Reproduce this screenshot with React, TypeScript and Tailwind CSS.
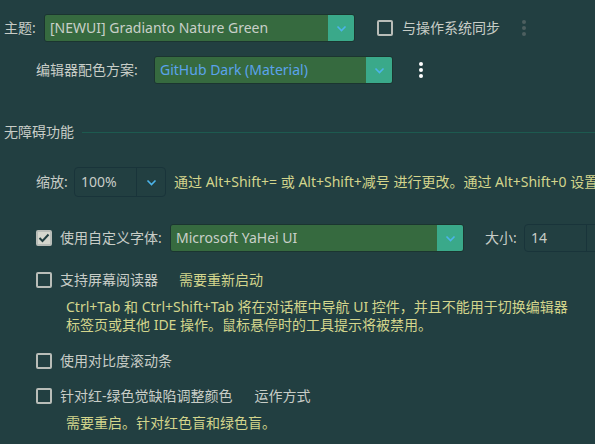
import React from "react"

const Chevron = () => (
  <svg width="11" height="7" viewBox="0 0 11 7" fill="none">
    <path d="M1.5 1.5 L5.5 5.5 L9.5 1.5" stroke="#4cb4ea" strokeWidth="1.6" />
  </svg>
)

const Dots = ({ dim }: { dim?: boolean }) => (
  <div className={`flex flex-col gap-[2px] ${dim ? "text-[#4d5f5f]" : "text-white"}`}>
    <span className="w-[4px] h-[4px] rounded-full bg-current" />
    <span className="w-[4px] h-[4px] rounded-full bg-current" />
    <span className="w-[4px] h-[4px] rounded-full bg-current" />
  </div>
)

const Check = ({ checked }: { checked?: boolean }) => (
  <div
    className={`w-[16px] h-[16px] shrink-0 rounded-[2px] border-2 border-[#b9bdb8] flex items-center justify-center ${
      checked ? "bg-[#d6d7ce]" : ""
    }`}
  >
    {checked && (
      <svg width="12" height="10" viewBox="0 0 12 10" fill="none">
        <path d="M1.5 5 L4.5 8 L10.5 1.5" stroke="#233f41" strokeWidth="2" />
      </svg>
    )}
  </div>
)

const GreenSelect = ({ value, width, blue }: { value: string; width: string; blue?: boolean }) => (
  <div className={`${width} h-[28px] flex rounded-[3px] border border-[#1b3530] overflow-hidden shrink-0`}>
    <div className={`flex-1 bg-[#366a3f] flex items-center pl-[5px] ${blue ? "text-[#5ba3ec]" : "text-[#c9d0c9]"}`}>
      {value}
    </div>
    <div className="w-[26px] bg-[#3aa98a] flex items-center justify-center">
      <Chevron />
    </div>
  </div>
)

export default function App() {
  return (
    <div
      className="w-[595px] h-[444px] overflow-hidden bg-[#223f41] text-[#c8cdc7] text-[14px] leading-[20px]"
      style={{ fontFamily: '"Noto Sans", "Noto Sans CJK SC", sans-serif' }}
    >
      {/* theme */}
      <div className="mt-[14px] h-[28px] flex items-center pl-[4px] whitespace-nowrap">
        <span className="w-[40px] shrink-0">主题:</span>
        <GreenSelect value="[NEWUI] Gradianto Nature Green" width="w-[311px]" />
        <div className="ml-[22px] shrink-0">
          <Check />
        </div>
        <span className="ml-[9px] shrink-0">与操作系统同步</span>
        <div className="ml-[22px] shrink-0">
          <Dots dim />
        </div>
      </div>

      {/* scheme */}
      <div className="mt-[14px] h-[28px] flex items-center pl-[36px] whitespace-nowrap">
        <span className="w-[118px] shrink-0">编辑器配色方案:</span>
        <GreenSelect value="GitHub Dark (Material)" width="w-[239px]" blue />
        <div className="ml-[26px] shrink-0">
          <Dots />
        </div>
      </div>

      {/* section */}
      <div className="mt-[38px] h-[20px] flex items-center pl-[4px]">
        <span className="whitespace-nowrap">无障碍功能</span>
        <div className="flex-1 h-px bg-[#1d5a4f] ml-[8px]" />
      </div>

      {/* zoom */}
      <div className="mt-[25px] h-[30px] flex items-center pl-[36px] whitespace-nowrap">
        <span className="w-[38px] shrink-0">缩放:</span>
        <div className="w-[92px] h-[30px] flex rounded-[4px] border border-[#19343a] shrink-0">
          <div className="w-[62px] flex items-center pl-[6px] border-r border-[#19343a]">100%</div>
          <div className="flex-1 flex items-center justify-center">
            <Chevron />
          </div>
        </div>
        <span className="ml-[8px] shrink-0 text-[#d3d58c]">
          通过 Alt+Shift+= 或 Alt+Shift+减号 进行更改。通过 Alt+Shift+0 设置
        </span>
      </div>

      {/* font */}
      <div className="mt-[27px] h-[28px] flex items-center pl-[36px] whitespace-nowrap">
        <Check checked />
        <span className="ml-[8px] w-[110px] shrink-0">使用自定义字体:</span>
        <GreenSelect value="Microsoft YaHei UI" width="w-[294px]" />
        <span className="ml-[21px] w-[39px] shrink-0">大小:</span>
        <div className="w-[90px] h-[28px] flex rounded-[4px] border border-[#19343a] shrink-0">
          <div className="w-[62px] flex items-center pl-[6px] border-r border-[#19343a]">14</div>
          <div className="flex-1" />
        </div>
      </div>

      {/* screen reader */}
      <div className="mt-[18px] h-[20px] flex items-center pl-[36px] whitespace-nowrap">
        <Check />
        <span className="ml-[8px] shrink-0">支持屏幕阅读器</span>
        <span className="ml-[21px] shrink-0 text-[#d3d58c]">需要重新启动</span>
      </div>
      <div className="mt-[8px] pl-[66px] text-[#d3d58c] leading-[18px] whitespace-nowrap">
        <div>Ctrl+Tab 和 Ctrl+Shift+Tab 将在对话框中导航 UI 控件，并且不能用于切换编辑器</div>
        <div>标签页或其他 IDE 操作。鼠标悬停时的工具提示将被禁用。</div>
      </div>

      {/* contrast */}
      <div className="mt-[17px] h-[20px] flex items-center pl-[36px] whitespace-nowrap">
        <Check />
        <span className="ml-[8px] shrink-0">使用对比度滚动条</span>
      </div>

      {/* color blindness */}
      <div className="mt-[15px] h-[20px] flex items-center pl-[36px] whitespace-nowrap">
        <Check />
        <span className="ml-[8px] shrink-0">针对红-绿色觉缺陷调整颜色</span>
        <span className="ml-[22px] shrink-0">运作方式</span>
      </div>
      <div className="mt-[8px] pl-[66px] text-[#d3d58c] leading-[18px] whitespace-nowrap">
        需要重启。针对红色盲和绿色盲。
      </div>
    </div>
  )
}
